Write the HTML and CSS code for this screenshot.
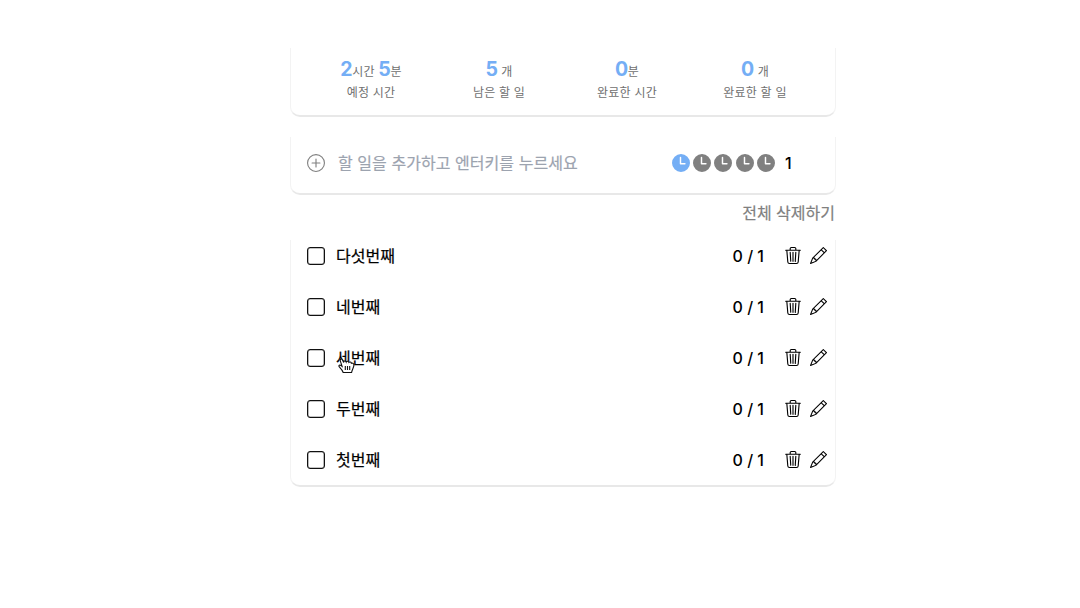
FILE: index.html
```html
<!DOCTYPE html>
<html lang="ko">
<head>
<meta charset="utf-8">
<title>할 일</title>
<link rel="stylesheet" href="styles.css">
</head>
<body>
<svg class="defs" viewBox="0 0 16 16">
  <symbol id="trash" viewBox="0 0 16 16" preserveAspectRatio="none"><path d="M6.5 1h3a.5.5 0 0 1 .5.5v1H6v-1a.5.5 0 0 1 .5-.5ZM11 2.5v-1A1.5 1.5 0 0 0 9.500 0h-3A1.5 1.5 0 0 0 5 1.5v1H1.5a.5.5 0 0 0 0 1h.538l.853 10.66A2 2 0 0 0 4.885 16h6.23a2 2 0 0 0 1.994-1.84l.853-10.66h.538a.5.5 0 0 0 0-1H11Zm1.958 1-.846 10.58a1 1 0 0 1-.997.92h-6.23a1 1 0 0 1-.997-.92L3.042 3.5h9.916Zm-7.487 1a.5.5 0 0 1 .528.47l.5 8.5a.5.5 0 0 1-.998.06L5 5.03a.5.5 0 0 1 .47-.53Zm5.058 0a.5.5 0 0 1 .47.53l-.5 8.5a.5.5 0 1 1-.998-.06l.5-8.5a.5.5 0 0 1 .528-.47ZM8 4.5a.5.5 0 0 1 .5.5v8.5a.5.5 0 0 1-1 0V5a.5.5 0 0 1 .5-.5Z"/></symbol>
  <symbol id="pencil" viewBox="0 0 16 16"><path d="M12.146.146a.5.5 0 0 1 .708 0l3 3a.5.5 0 0 1 0 .708l-10 10a.5.5 0 0 1-.168.11l-5 2a.5.5 0 0 1-.65-.65l2-5a.5.5 0 0 1 .11-.168l10-10zM11.207 2.5 13.5 4.793 14.793 3.5 12.5 1.207 11.207 2.5zm1.586 3L10.5 3.207 4 9.707V10h.5a.5.5 0 0 1 .5.5v.5h.5a.5.5 0 0 1 .5.5v.5h.293l6.5-6.5zm-9.761 5.175-.106.106-1.528 3.821 3.821-1.528.106-.106A.5.5 0 0 1 5 12.5V12h-.5a.5.5 0 0 1-.5-.5V11h-.5a.5.5 0 0 1-.468-.325z"/></symbol>
  <symbol id="clock" viewBox="0 0 16 16"><path d="M16 8A8 8 0 1 1 0 8a8 8 0 0 1 16 0zM8.200 3.200a.65.65 0 0 0-1.300 0V8.700a.65.65 0 0 0 .65.65H11.500a.65.65 0 0 0 0-1.300H8.200V3.200z"/></symbol>
  <symbol id="plus" viewBox="0 0 16 16"><path d="M8 15A7 7 0 1 1 8 1a7 7 0 0 1 0 14zm0 1A8 8 0 1 0 8 0a8 8 0 0 0 0 16z"/><path d="M8 4a.5.5 0 0 1 .5.5v3h3a.5.5 0 0 1 0 1h-3v3a.5.5 0 0 1-1 0v-3h-3a.5.5 0 0 1 0-1h3v-3A.5.5 0 0 1 8 4z"/></symbol>
</svg>
<main class="app">
  <section class="card stats">
    <div class="stat"><p class="value"><b>2</b>시간 <b>5</b>분</p><p class="label">예정 시간</p></div>
    <div class="stat"><p class="value"><b>5</b> 개</p><p class="label">남은 할 일</p></div>
    <div class="stat"><p class="value"><b>0</b>분</p><p class="label">완료한 시간</p></div>
    <div class="stat"><p class="value"><b>0</b> 개</p><p class="label">완료한 할 일</p></div>
  </section>
  <section class="card add">
    <svg class="icon plus"><use href="#plus"/></svg>
    <span class="placeholder">할 일을 추가하고 엔터키를 누르세요</span>
    <div class="clocks">
      <svg class="icon on"><use href="#clock"/></svg>
      <svg class="icon"><use href="#clock"/></svg>
      <svg class="icon"><use href="#clock"/></svg>
      <svg class="icon"><use href="#clock"/></svg>
      <svg class="icon"><use href="#clock"/></svg>
    </div>
    <span class="amount">1</span>
  </section>
  <div class="clear">전체 삭제하기</div>
  <ul class="card list">
    <li class="item"><span class="check"></span><span class="name">다섯번째</span><span class="count">0 / 1</span><svg class="icon"><use href="#trash"/></svg><svg class="icon"><use href="#pencil"/></svg></li>
    <li class="item"><span class="check"></span><span class="name">네번째</span><span class="count">0 / 1</span><svg class="icon"><use href="#trash"/></svg><svg class="icon"><use href="#pencil"/></svg></li>
    <li class="item"><span class="check"></span><span class="name">세번째
      <svg class="cursor" viewBox="0 0 18 18"><path d="M5.200 16.500C4.600 14.500 3 12.800 1.500 11.200.4 10 1 8.600 2.600 9.300l1.500 1L2.300 4.800C1.800 3 3.800 2.400 4.500 4l1.200 2.500C5.500 4.700 7.600 4.400 8.200 6c.4-1.200 2.300-1 2.700.4.7-.8 2.300-.4 2.500.9 1.200-.5 2.500.2 2.500 1.600 0 2.700-1.700 4.300-2.300 7.600z"/><path d="M7.300 10v4M9.500 10v4M11.700 10v4"/></svg></span><span class="count">0 / 1</span><svg class="icon"><use href="#trash"/></svg><svg class="icon"><use href="#pencil"/></svg></li>
    <li class="item"><span class="check"></span><span class="name">두번째</span><span class="count">0 / 1</span><svg class="icon"><use href="#trash"/></svg><svg class="icon"><use href="#pencil"/></svg></li>
    <li class="item"><span class="check"></span><span class="name">첫번째</span><span class="count">0 / 1</span><svg class="icon"><use href="#trash"/></svg><svg class="icon"><use href="#pencil"/></svg></li>
  </ul>
</main>
</body>
</html>
```

FILE: styles.css
```css
* { box-sizing: border-box; margin: 0; padding: 0; }
body { background: #fff; color: #000; font: 500 16px/24px Inter, "Noto Sans CJK KR", sans-serif; }
.defs { display: none; }
.app { width: 546px; margin-left: 290px; padding-top: 48px; }
.card { border: solid #f3f3f3; border-width: 0 1px 2px; border-bottom-color: #e8e8e8; border-radius: 0 0 10px 10px; }
.icon { width: 18px; height: 18px; flex: none; fill: currentColor; }
.stats { display: grid; grid-template-columns: repeat(4, 1fr); height: 69px; padding: 9px 16px 0; text-align: center; color: #707070; }
.value { font-size: 12px; line-height: 25px; font-weight: 400; letter-spacing: .2px; white-space: nowrap; }
.value b { font-size: 19.500px; font-weight: 700; letter-spacing: -.2px; color: #74aef5; }
.label { font-size: 12px; line-height: 18px; font-weight: 400; letter-spacing: .2px; }
.add { display: flex; align-items: center; height: 58px; margin-top: 20px; padding: 0 40px 4px 16px; }
.plus { color: #808080; }
.placeholder { flex: 1; margin-left: 13px; font-weight: 400; letter-spacing: .05px; color: #9ca3af; -webkit-text-stroke: .2px; }
.clocks { display: flex; gap: 3.300px; color: #808080; }
.clocks .on { color: #74aef5; }
.amount { width: 10px; margin-left: 10px; }
.clear { margin-top: 6px; padding-right: 1px; text-align: right; font-weight: 400; color: #808080; -webkit-text-stroke: .2px; }
.list { display: flex; flex-direction: column; gap: 33px; list-style: none; height: 247px; margin-top: 15px; padding: 7px 8px 0 16px; }
.item { display: flex; align-items: center; height: 18px; }
.check { width: 18px; height: 18px; border: 1.500px solid #111; border-radius: 3px; box-shadow: inset 0 0 0 .3px #111; }
.name { position: relative; flex: 1; margin-left: 11px; font-weight: 400; -webkit-text-stroke: .2px; }
.count { margin-right: 20px; font-weight: 450; }
.item .icon { width: 17px; height: 17px; margin-bottom: 1px; }
.item .icon + .icon { margin-left: 8px; }
.cursor { position: absolute; left: 2px; top: 10px; width: 18px; height: 18px; fill: #fff; stroke: #111; stroke-width: 1.100; }
.count + .icon { width: 18px; }
```
